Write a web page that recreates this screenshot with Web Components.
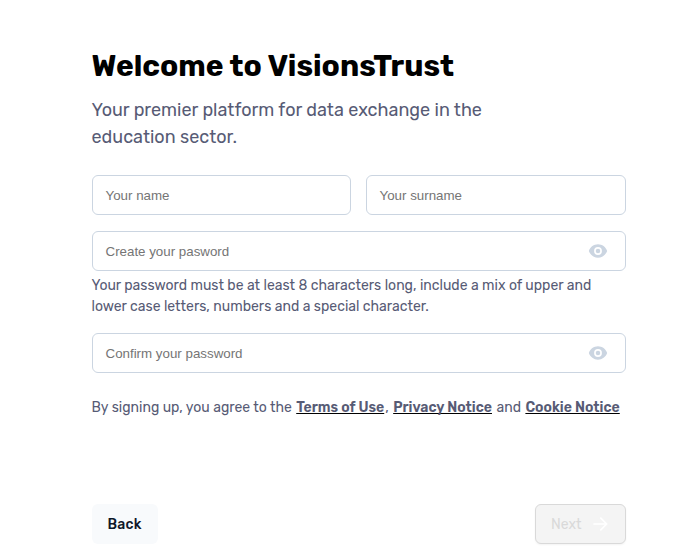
<!DOCTYPE html>
<html lang="en">
<head>
<meta charset="utf-8">
<title>VisionsTrust</title>
<style>
html,body{margin:0;background:#fff;font-family:Rubik,Roboto,"Liberation Sans",sans-serif}
</style>
</head>
<body>
<signup-page></signup-page>
<script>
class EyeIcon extends HTMLElement {
  constructor() {
    super();
    this.attachShadow({mode: 'open'}).innerHTML = `
      <style>:host{display:block;width:20px;height:20px}svg{display:block}</style>
      <svg width="20" height="20" viewBox="0 0 24 24" fill="#cbd5e1"><path d="M12 4C7 4 2.730 7.300 1 12c1.730 4.700 6 8 11 8s9.270-3.300 11-8c-1.730-4.700-6-8-11-8zm0 12.700a4.700 4.700 0 1 1 0-9.400 4.700 4.700 0 0 1 0 9.400zm0-2a2.700 2.700 0 1 0 0-5.400 2.700 2.700 0 0 0 0 5.400z"/></svg>`;
  }
}
class TextField extends HTMLElement {
  constructor() {
    super();
    this.attachShadow({mode: 'open'}).innerHTML = `
      <style>
        :host{display:flex;align-items:center;justify-content:space-between;box-sizing:border-box;height:40px;
          padding:0 17px 0 12.500px;border:1px solid #cbd5e1;border-radius:6px;background:#fff;
          font:13.333px/20px "Liberation Sans",Arial,sans-serif;color:#757575;min-width:0}
        .text{padding-top:2px}
      </style>
      <span class="text"><slot></slot></span><slot name="icon"></slot>`;
  }
}
class ActionButton extends HTMLElement {
  constructor() {
    super();
    this.attachShadow({mode: 'open'}).innerHTML = `
      <style>
        :host{display:flex;align-items:center;box-sizing:border-box;height:40px;padding:0 15.500px;border-radius:6px;
          background:#f8fafc;color:#0f172a;font-size:14px;font-weight:500;line-height:20px;letter-spacing:.2px}
        :host([disabled]){background:#f4f4f4;border:1px solid #d9d9d9;color:#d9d9d9;font-weight:400;letter-spacing:0;
          padding:0 15px;justify-content:space-between;box-shadow:0 1px 2px rgba(0,0,0,.05)}
        .text{padding-top:1px}
      </style>
      <span class="text"><slot></slot></span><slot name="icon"></slot>`;
  }
}
class SignupPage extends HTMLElement {
  constructor() {
    super();
    this.attachShadow({mode: 'open'}).innerHTML = `
      <style>
        :host{display:block;box-sizing:border-box;width:695px;height:555px;padding:44px 69px 11px 92px;color:#575b75;overflow:hidden}
        h1{margin:0 0 0 -0.500px;font-size:30px;line-height:45px;font-weight:700;color:#000}
        p{margin:0 0 0 -0.500px}
        .sub{margin-top:8px;font-size:18px;line-height:27px;width:400px}
        .names{display:grid;grid-template-columns:259px 260px;gap:15px;margin:24px 0 16px}
        .help{margin-top:4px;margin-bottom:16px;font-size:14px;line-height:21px;width:520px}
        .terms{margin-top:24px;font-size:14px;line-height:21px;white-space:nowrap}
        a{margin:0 1px;font-weight:600;text-decoration:underline;text-decoration-color:#000;text-decoration-thickness:1px;
          text-underline-offset:1px;text-decoration-skip-ink:none}
        .actions{display:flex;justify-content:space-between;margin-top:86px}
        .back{width:66px}.next{width:91px}
        svg{display:block}
      </style>
      <h1>Welcome to VisionsTrust</h1>
      <p class="sub">Your premier platform for data exchange in the education sector.</p>
      <div class="names">
        <text-field>Your name</text-field>
        <text-field>Your surname</text-field>
      </div>
      <text-field>Create your pasword<eye-icon slot="icon"></eye-icon></text-field>
      <p class="help">Your password must be at least 8 characters long, include a mix of upper and lower case letters, numbers and a special character.</p>
      <text-field>Confirm your password<eye-icon slot="icon"></eye-icon></text-field>
      <p class="terms">By signing up, you agree to the <a>Terms of Use</a>, <a>Privacy Notice</a> and <a>Cookie Notice</a></p>
      <div class="actions">
        <action-button class="back">Back</action-button>
        <action-button class="next" disabled>Next<svg slot="icon" width="20" height="20" viewBox="0 0 20 20" fill="none" stroke="#fff" stroke-width="1.700" stroke-linecap="round" stroke-linejoin="round"><path d="M4 10h12.500M10.800 4.200l5.900 5.800-5.900 5.800"/></svg></action-button>
      </div>`;
  }
}
customElements.define('eye-icon', EyeIcon);
customElements.define('text-field', TextField);
customElements.define('action-button', ActionButton);
customElements.define('signup-page', SignupPage);
</script>
</body>
</html>
